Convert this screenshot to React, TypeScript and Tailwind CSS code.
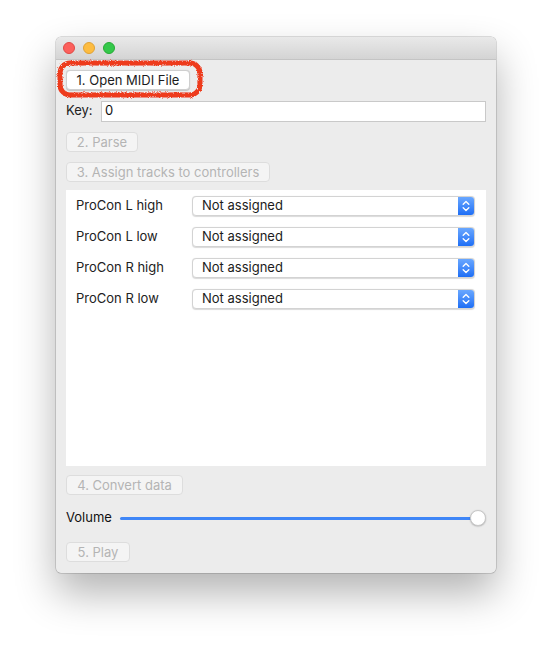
import React from "react";

const font = { fontFamily: "Inter, 'Noto Sans', 'Liberation Sans', sans-serif" };

function Btn({ children, w, disabled }: { children: React.ReactNode; w: string; disabled?: boolean }) {
  return (
    <div
      className={
        "h-[20px] rounded-[4px] flex items-center justify-center text-[13px] leading-none " +
        w +
        (disabled
          ? " bg-[#f4f4f4] text-[#b4b4b4] border border-[#dddddd]"
          : " bg-white text-[#1c1c1c] border border-[#cfcfcf] shadow-[0_0.5px_1px_rgba(0,0,0,0.18)]")
      }
    >
      {children}
    </div>
  );
}

function Select({ label }: { label: string }) {
  return (
    <div className="flex items-center h-[20px]">
      <div className="w-[116px] text-[13px] text-[#222]">{label}</div>
      <div className="flex-1 h-[20px] flex bg-white rounded-[4px] border border-[#d3d3d3] shadow-[0_0.5px_1px_rgba(0,0,0,0.15)] overflow-hidden">
        <div className="flex-1 flex items-center pl-[9px] text-[13px] text-[#1c1c1c]">Not assigned</div>
        <div className="w-[16px] h-full bg-gradient-to-b from-[#69a7ff] to-[#1d6ef5] flex items-center justify-center">
          <svg width="8" height="12" viewBox="0 0 8 12" fill="none" stroke="white" strokeWidth="1.4" strokeLinecap="round" strokeLinejoin="round">
            <path d="M1.2 4.2 L4 1.6 L6.8 4.2" />
            <path d="M1.2 7.8 L4 10.4 L6.8 7.8" />
          </svg>
        </div>
      </div>
    </div>
  );
}

export default function App() {
  return (
    <div className="w-[552px] h-[647px] bg-white overflow-hidden" style={font}>
      <div className="ml-[56px] mt-[37px] w-[440px] h-[536px] rounded-[5px] bg-[#ececec] shadow-[0_20px_40px_rgba(0,0,0,0.3),0_0_0_0.5px_rgba(0,0,0,0.25)] flex flex-col overflow-hidden">
        {/* title bar */}
        <div className="h-[23px] shrink-0 bg-gradient-to-b from-[#e9e9e9] to-[#d4d4d4] border-b border-[#c4c4c4] flex items-center pl-[7px] gap-[8px]">
          <div className="w-[12px] h-[12px] rounded-full bg-[#fc605c] border border-[#de4a45]" />
          <div className="w-[12px] h-[12px] rounded-full bg-[#fdbc40] border border-[#dea236]" />
          <div className="w-[12px] h-[12px] rounded-full bg-[#34c84a] border border-[#27aa35]" />
        </div>

        <div className="flex flex-col px-[10px]">
          {/* button 1 with scribble */}
          <div className="relative mt-[10px] self-start">
            <Btn w="w-[124px]">1. Open MIDI File</Btn>
            <svg className="absolute left-[-10px] top-[-11px] pointer-events-none" width="148" height="40" viewBox="0 0 148 40">
              <defs>
                <filter id="rough" x="-10%" y="-30%" width="120%" height="160%">
                  <feTurbulence type="fractalNoise" baseFrequency="1.1" numOctaves="2" seed="5" />
                  <feDisplacementMap in="SourceGraphic" scale="3.5" />
                </filter>
              </defs>
              <g filter="url(#rough)" fill="none" stroke="#ee3b1e">
                <rect x="4" y="4" width="140" height="32" rx="10" strokeWidth="5" />
                <rect x="3" y="3" width="142" height="34" rx="11" strokeWidth="1.5" strokeDasharray="2 3" opacity="0.8" />
                <rect x="5.5" y="5.5" width="137" height="29" rx="9" strokeWidth="1.5" strokeDasharray="3 2" opacity="0.8" />
              </g>
            </svg>
          </div>

          {/* key row */}
          <div className="flex items-center mt-[11px] h-[20px]">
            <div className="w-[35px] text-[13px] text-[#222]">Key:</div>
            <div className="flex-1 h-[21px] bg-white border border-[#c9c9c9] flex items-center pl-[3px] text-[13px] text-[#111]">0</div>
          </div>

          <div className="mt-[11px]">
            <Btn w="w-[72px]" disabled>2. Parse</Btn>
          </div>
          <div className="mt-[10px]">
            <Btn w="w-[204px]" disabled>3. Assign tracks to controllers</Btn>
          </div>

          {/* panel */}
          <div className="mt-[8px] h-[276px] bg-white pl-[10px] pr-[11px] pt-[6px] flex flex-col gap-[11px]">
            <Select label="ProCon L high" />
            <Select label="ProCon L low" />
            <Select label="ProCon R high" />
            <Select label="ProCon R low" />
          </div>

          <div className="mt-[9px]">
            <Btn w="w-[117px]" disabled>4. Convert data</Btn>
          </div>

          {/* volume */}
          <div className="mt-[14px] h-[18px] flex items-center">
            <div className="w-[54px] text-[13px] text-[#111]">Volume</div>
            <div className="flex-1 relative h-[18px] flex items-center">
              <div className="flex-1 h-[3px] rounded-full bg-[#3f86f7] mr-[8px]" />
              <div className="absolute right-0 top-[1px] w-[16px] h-[16px] rounded-full bg-white border border-[#c8c8c8] shadow-[0_0.5px_1.5px_rgba(0,0,0,0.25)]" />
            </div>
          </div>

          <div className="mt-[15px]">
            <Btn w="w-[64px]" disabled>5. Play</Btn>
          </div>
        </div>
      </div>
    </div>
  );
}
